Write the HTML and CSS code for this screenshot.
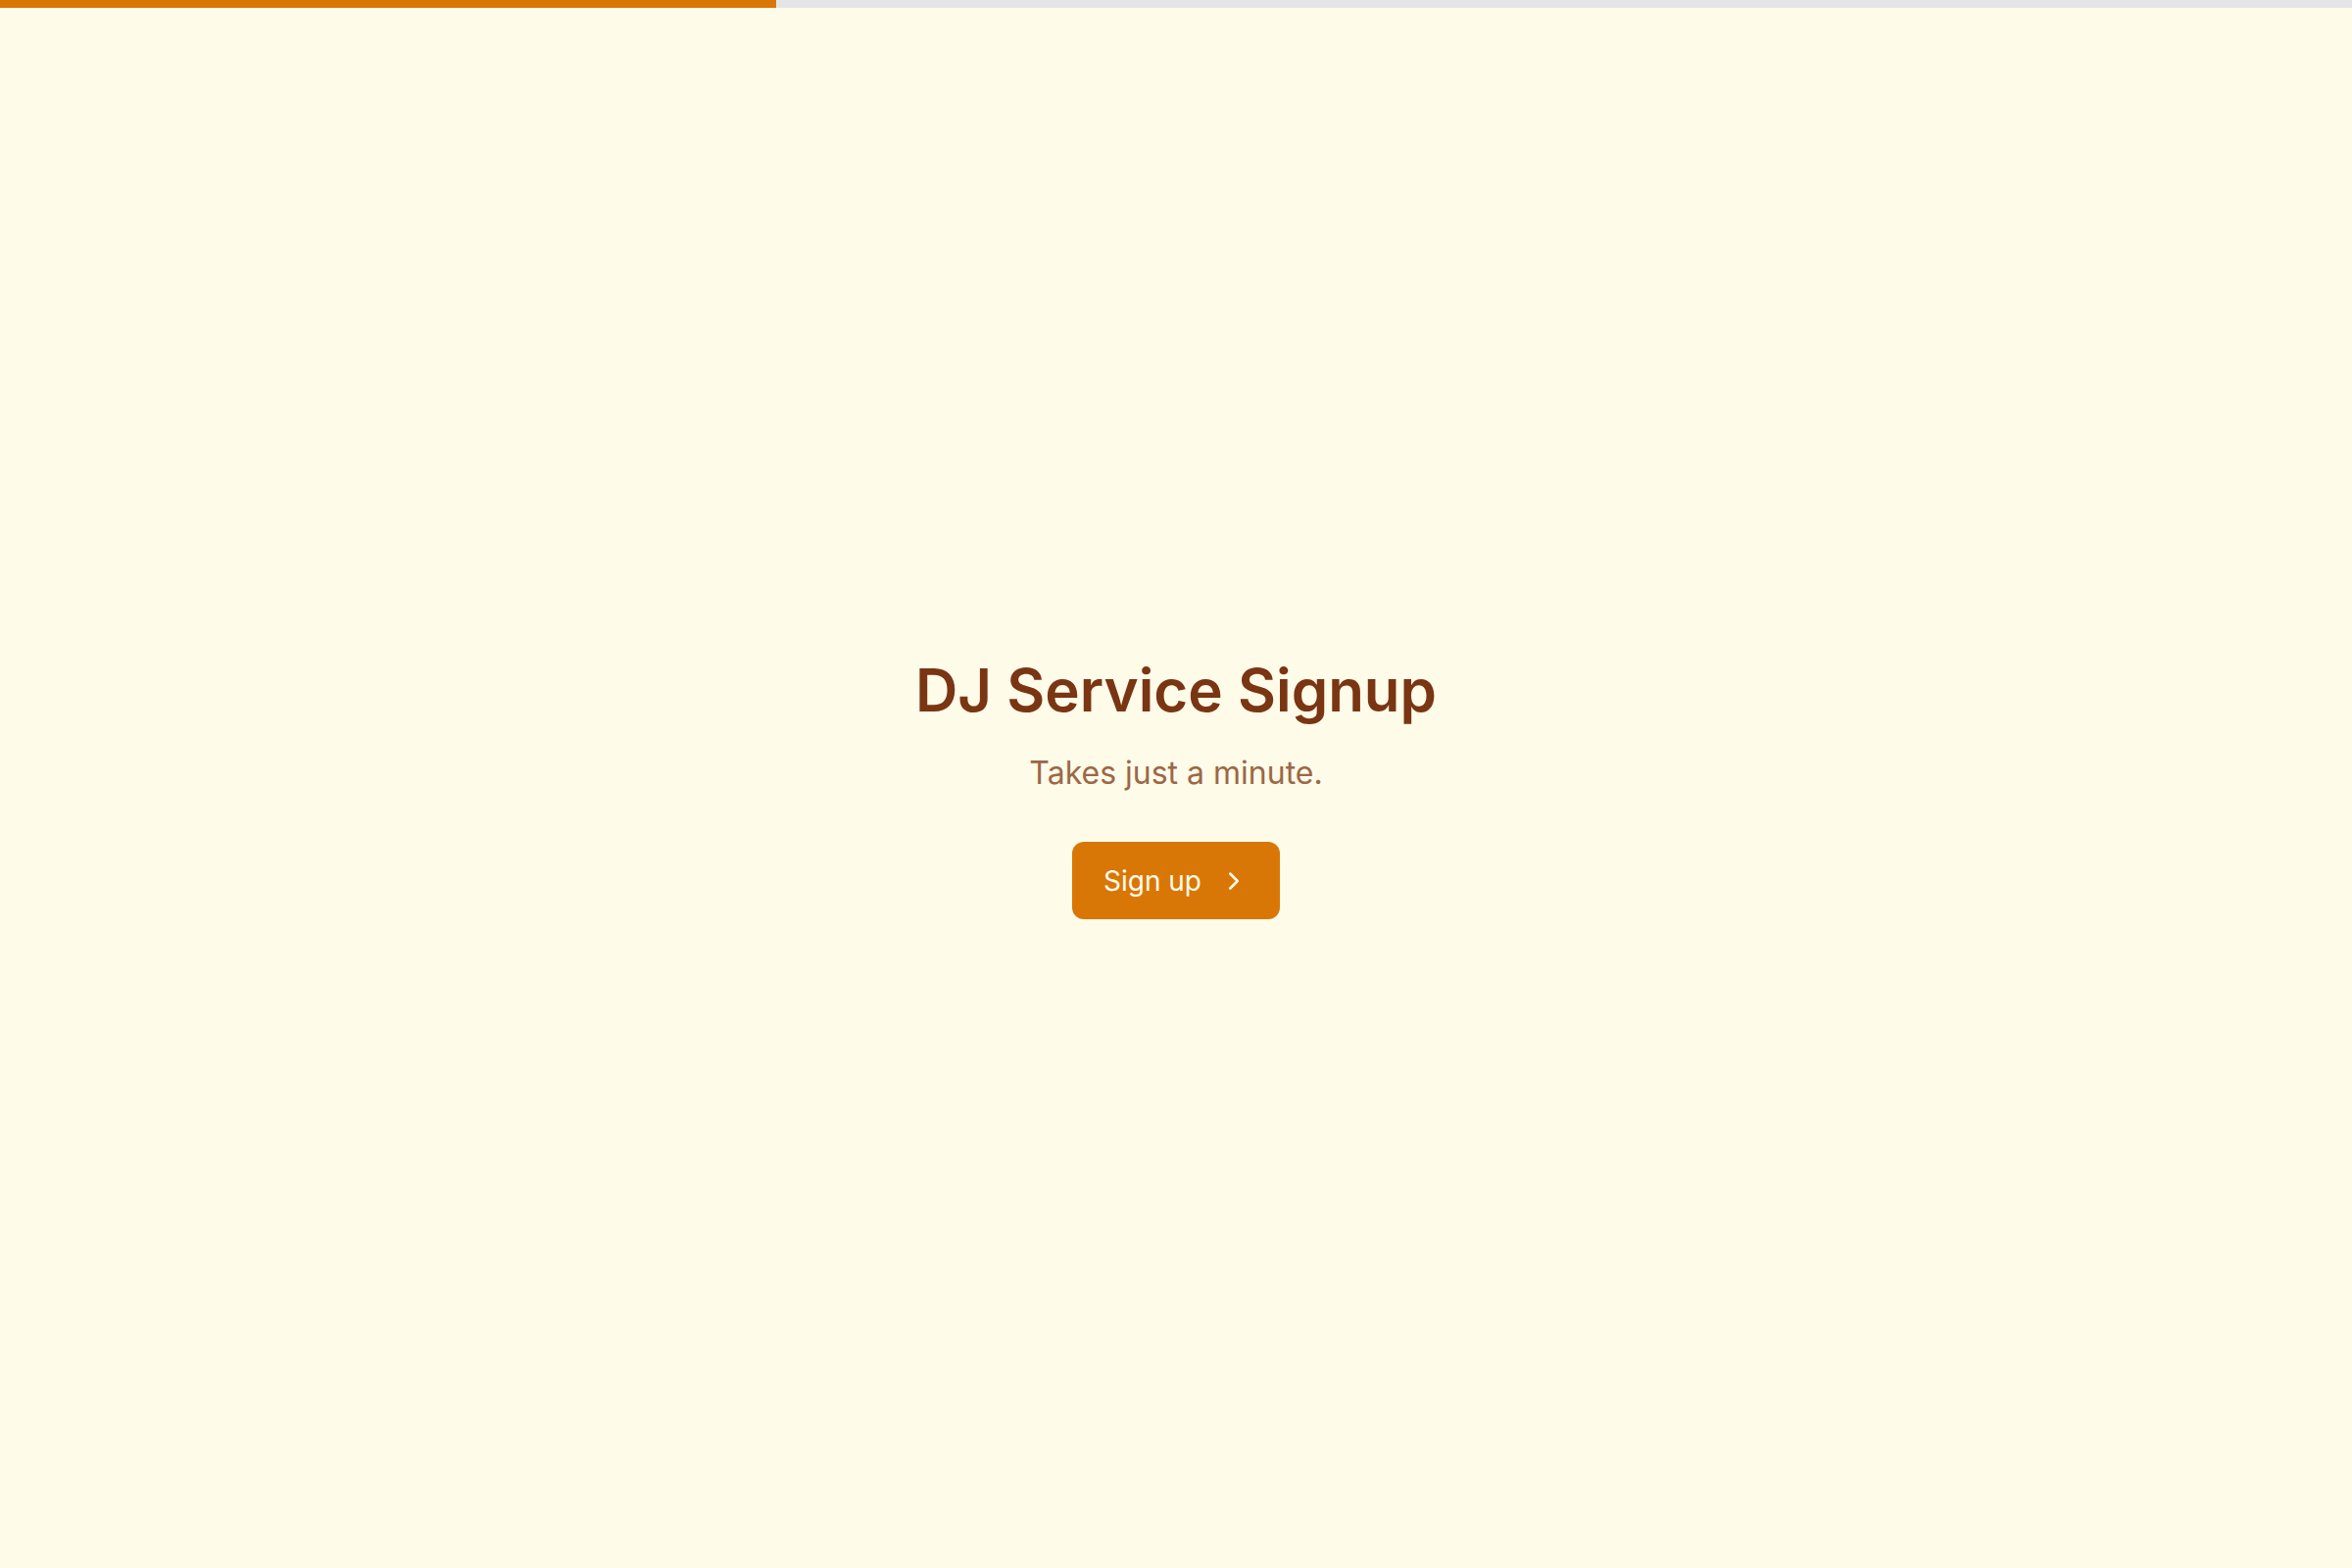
FILE: index.html
```html
<!DOCTYPE html>
<html lang="en">
<head>
<meta charset="utf-8">
<title>DJ Service Signup</title>
<link rel="stylesheet" href="styles.css">
</head>
<body>
<div class="progress"><div class="progress-fill" style="width: 33%"></div></div>
<main class="hero">
  <h1 class="title">DJ Service Signup</h1>
  <p class="subtitle">Takes just a minute.</p>
  <button class="cta" type="button">
    <span>Sign up</span>
    <svg class="cta-icon" viewBox="0 0 24 24" fill="none" stroke="currentColor" stroke-width="2" stroke-linecap="round" stroke-linejoin="round"><path d="m9 18 6-6-6-6"/></svg>
  </button>
</main>
</body>
</html>
```
FILE: styles.css
```css
* { box-sizing: border-box; }
html, body { margin: 0; padding: 0; }
body {
  background: #fefbe9;
  font-family: Inter, "Noto Sans", "Liberation Sans", sans-serif;
  min-height: 100vh;
}
.progress {
  position: fixed;
  top: 0;
  left: 0;
  right: 0;
  height: 8px;
  background: #e5e5e7;
}
.progress-fill {
  height: 100%;
  background: #d97706;
}
.hero {
  min-height: 100vh;
  display: flex;
  flex-direction: column;
  align-items: center;
  justify-content: center;
  text-align: center;
  padding-top: 6px;
}
.title {
  margin: 0;
  font-size: 60px;
  line-height: 72px;
  font-weight: 600;
  color: #7a3512;
}
.subtitle {
  margin: 25px 0 0;
  font-size: 32px;
  line-height: 48px;
  color: #9c6747;
}
.cta {
  margin-top: 46px;
  height: 79px;
  padding: 0 32px;
  display: inline-flex;
  align-items: center;
  gap: 18px;
  border: none;
  border-radius: 12px;
  background: #d97706;
  color: #fffbeb;
  font-family: inherit;
  font-size: 28px;
  font-weight: 400;
  cursor: pointer;
}
.cta-icon {
  width: 30px;
  height: 30px;
}
```
